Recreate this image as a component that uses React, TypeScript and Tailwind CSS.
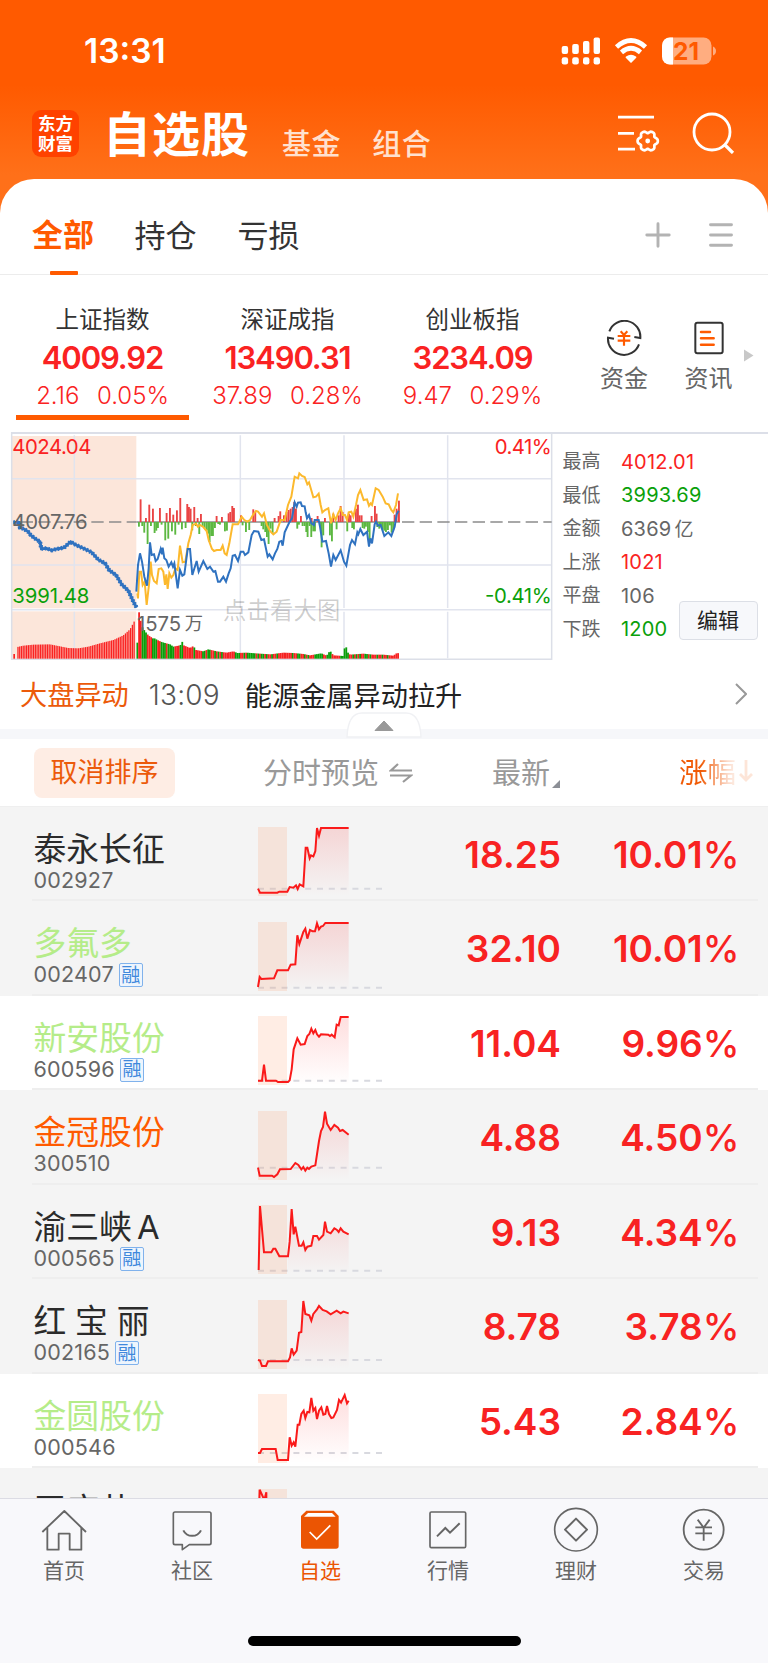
import React from "react";

type Pt = [number, number];

const toPoints = (pts: Pt[]) => pts.map((p) => p.join(",")).join(" ");

/* ---------- Intraday chart data (chart units, three per pixel) ---------- */

const preLine: Pt[] = [
  [40, 292], [58, 292], [60, 308], [72, 312], [84, 320], [92, 330], [104, 340], [120, 350], [124, 371], [140, 370], [155, 376],
  [170, 372], [192, 368], [212, 350], [228, 360], [250, 370], [275, 382], [295, 404], [315, 415], [328, 436],
  [348, 450], [365, 478], [385, 497], [400, 530], [410, 548],
];

const indexLine: Pt[] = [
  [409, 500], [414, 420], [420, 385], [426, 410], [433, 455], [441, 482], [446, 430], [450, 352], [455, 390], [462, 388],
  [467, 408], [473, 402], [482, 372], [486, 388], [488, 368], [493, 400], [499, 405], [506, 425], [514, 412], [519, 425],
  [523, 415], [533, 490], [540, 435], [547, 452], [553, 448], [563, 372], [570, 372], [577, 450], [590, 408], [596, 440],
  [610, 408], [622, 432], [630, 425], [640, 440], [646, 438], [654, 470], [660, 470], [670, 455], [678, 470], [686, 445],
  [692, 430], [698, 392], [705, 390], [714, 408], [722, 380], [730, 380], [735, 390], [745, 382], [755, 330], [762, 318],
  [775, 320], [784, 345], [792, 343], [803, 395], [808, 388], [818, 403], [825, 385], [832, 372], [838, 350], [844, 348],
  [848, 362], [854, 322], [868, 292], [876, 280], [884, 232], [890, 245], [894, 233], [902, 232], [906, 243], [914, 244],
  [917, 262], [921, 280], [927, 270], [934, 295], [942, 300], [944, 285], [956, 285], [960, 305], [967, 350], [978, 348],
  [986, 385], [993, 425], [1000, 390], [1007, 405], [1022, 376], [1032, 410], [1039, 422], [1050, 360], [1056, 345],
  [1065, 358], [1072, 322], [1075, 328], [1081, 312], [1090, 330], [1101, 320], [1107, 365], [1111, 340], [1116, 355],
  [1124, 298], [1128, 290], [1134, 302], [1142, 300], [1153, 333], [1165, 322], [1174, 333], [1184, 305], [1190, 268], [1196, 257],
];

const leadLine: Pt[] = [
  [412, 505], [414, 520], [418, 440], [423, 440], [428, 480], [434, 470], [440, 540], [448, 470], [452, 410], [456, 450],
  [462, 468], [470, 475], [476, 432], [484, 430], [490, 440], [495, 480], [499, 448], [503, 492], [508, 445], [514, 458],
  [520, 450], [526, 430], [533, 435], [540, 362], [548, 412], [556, 410], [565, 355], [572, 330], [578, 300], [588, 296],
  [594, 305], [600, 300], [610, 306], [620, 318], [626, 345], [636, 372], [642, 378], [650, 375], [662, 375], [668, 362],
  [674, 385], [680, 390], [688, 355], [698, 298], [714, 298], [725, 275], [733, 285], [742, 290], [750, 285], [760, 268],
  [768, 258], [774, 260], [786, 275], [792, 265], [800, 298], [810, 318], [820, 328], [830, 320], [842, 285], [854, 285],
  [864, 240], [874, 215], [884, 155], [894, 160], [898, 145], [906, 153], [914, 156], [922, 178], [927, 172], [940, 217],
  [948, 215], [956, 206], [962, 240], [967, 262], [975, 255], [985, 250], [993, 295], [1000, 268], [1007, 285], [1014, 265],
  [1022, 250], [1028, 270], [1035, 270], [1041, 285], [1046, 262], [1054, 260], [1060, 275], [1068, 240], [1074, 210],
  [1081, 195], [1091, 225], [1101, 223], [1107, 242], [1112, 235], [1116, 240], [1127, 190], [1136, 195], [1148, 215],
  [1157, 235], [1166, 238], [1174, 255], [1180, 262], [1188, 240], [1194, 205],
];

const upBars: Pt[] = [
  [422, 68], [438, 12], [448, 52], [459, 40], [480, 42], [500, 27], [510, 42], [520, 22], [531, 35], [541, 72], [562, 54],
  [567, 45], [572, 40], [583, 45], [593, 12], [603, 24], [650, 18], [666, 15], [686, 26], [691, 30], [697, 48], [702, 42],
  [723, 20], [760, 38], [766, 30], [824, 12], [836, 18], [841, 32], [852, 20], [860, 30], [866, 36], [872, 40], [878, 45],
  [883, 60], [888, 40], [903, 18], [935, 12], [953, 18], [975, 12], [1000, 25], [1016, 20], [1022, 48], [1028, 30],
  [1047, 25], [1052, 20], [1068, 40], [1074, 52], [1079, 20], [1085, 20], [1115, 18], [1125, 48], [1130, 25], [1184, 22],
  [1190, 40], [1197, 64],
];

const downBars: Pt[] = [
  [417, 14], [427, 12], [433, 32], [443, 66], [453, 12], [464, 33], [469, 26], [474, 18], [485, 8], [496, 55], [505, 50],
  [516, 28], [526, 38], [536, 8], [546, 22], [557, 18], [577, 25], [588, 12], [598, 36], [608, 14], [614, 18], [620, 24],
  [625, 35], [629, 60], [634, 42], [639, 42], [645, 18], [655, 6], [660, 8], [675, 28], [681, 26], [728, 10], [738, 30],
  [748, 24], [785, 12], [790, 22], [796, 30], [801, 45], [806, 66], [812, 20], [818, 35], [892, 20], [897, 8], [908, 12],
  [914, 12], [919, 30], [923, 45], [929, 12], [934, 45], [940, 28], [945, 28], [960, 12], [965, 76], [970, 40], [990, 40],
  [996, 58], [1010, 22], [1042, 28], [1057, 18], [1062, 22], [1088, 18], [1093, 20], [1098, 14], [1109, 55], [1104, 30],
  [1132, 15], [1138, 20], [1143, 16], [1148, 22], [1153, 26], [1158, 30], [1164, 24], [1170, 10], [1175, 32], [1180, 25],
];

const preVolume: Pt[] = [
  [52, 35], [70, 39], [100, 42], [150, 43], [175, 38], [205, 32], [235, 31], [265, 36], [300, 46], [340, 56], [370, 70], [390, 88], [406, 118],
];

const volume: Pt[] = [
  [412, 48], [417, 140], [422, 115], [427, 95], [435, 82], [445, 70], [460, 60], [465, 61], [470, 57], [485, 50], [495, 47],
  [510, 43], [520, 36], [530, 38], [541, 40], [546, 52], [551, 40], [570, 32], [580, 38], [588, 26], [610, 22], [625, 28],
  [650, 22], [680, 18], [700, 22], [712, 17], [740, 18], [780, 15], [812, 13], [850, 18], [880, 17], [910, 14], [930, 10],
  [964, 16], [980, 9], [990, 24], [1000, 10], [1030, 8], [1036, 46], [1042, 20], [1050, 12], [1090, 15], [1120, 12],
  [1150, 12], [1180, 9], [1192, 18], [1198, 14],
];

const volumeColors =
  "grrgggrrrgggrrgggrggggrrrggrrrrrrgrrrrggrggrrgrgrgrrrrrrrgggrrgrgggggrgrggrgrrgrrgrrrrrrrrgrrggrrgrgrrrgggggrrgggrrrrrgggrrrrgrgrgrrggrgrrrgrrgrrgrrrrr";

function heightAt(series: Pt[], x: number) {
  for (let i = 1; i < series.length; i++) {
    const [x0, h0] = series[i - 1];
    const [x1, h1] = series[i];
    if (x <= x1) return h0 + ((h1 - h0) * (x - x0)) / (x1 - x0);
  }
  return series[series.length - 1][1];
}

function IndexChart() {
  const pre = Array.from({ length: 68 }, (_, i) => 54 + i * 5.2);
  const vol = Array.from({ length: 152 }, (_, i) => 412 + i * 5.18);
  return (
    <svg width="553" height="229" viewBox="0 21 1659 687" className="shrink-0">
      <rect x="36" y="33" width="373" height="517" fill="#fce6da" />
      <rect x="36" y="559" width="373" height="143" fill="#fce6da" />
      <g stroke="#e1e4ee" strokeWidth="4.5">
        <path d="M223 31V549M223 560V700M721 31V549M721 560V700M1032 31V549M1032 560V700M1343 31V549M1343 560V700" />
        <path d="M35 161H1655M35 420H1655M35 554H1655" />
        <path d="M1655 22V704M35 22V704M33 702.5H1657" stroke="#dcdfe8" />
      </g>
      <path d="M62 291H409M1206 291H1655" stroke="#8c8c8c" strokeWidth="5" strokeDasharray="37 16" />
      <path d="M409 291H1200" stroke="#8c8c8c" strokeWidth="4" />
      {upBars.map(([x, h]) => (
        <rect key={x} x={x - 3} y={291 - h} width="5.6" height={h} fill="#ea4444" />
      ))}
      {downBars.map(([x, h]) => (
        <rect key={x} x={x - 3} y={291} width="5.6" height={h} fill="#5cb841" />
      ))}
      <rect x="40" y="687" width="5" height="14" fill="#fa2222" />
      {pre.map((x) => {
        const h = heightAt(preVolume, x);
        return <rect key={x} x={x - 2} y={701 - h} width="3.9" height={h} fill="#fa2222" />;
      })}
      {vol.map((x, i) => {
        const h = heightAt(volume, x);
        const green = volumeColors[i] === "g" || (x > 1032 && x < 1044);
        return <rect key={x} x={x - 2.6} y={701 - h} width="5.4" height={h} fill={green ? "#0a9e0a" : "#f52222"} />;
      })}
      <polyline points={toPoints(leadLine)} fill="none" stroke="#fcb92d" strokeWidth="6" />
      <polyline points={toPoints(indexLine)} fill="none" stroke="#2f72c0" strokeWidth="6" />
      <polyline points={toPoints(preLine)} fill="none" stroke="#2f72c0" strokeWidth="8.5" />
      <polyline points={toPoints(preLine)} fill="none" stroke="#2f72c0" strokeWidth="13" strokeDasharray="5 5" />
      <g fontSize="61" dominantBaseline="alphabetic">
        <text x="37" y="85.5" fill="#fa2222" textLength="237">4024.04</text>
        <text x="37" y="310.5" fill="#666" textLength="226">4007.76</text>
        <text x="37" y="533" fill="#0aa00a" textLength="231">3991.48</text>
        <text x="1655" y="85.5" fill="#fa2222" textAnchor="end" textLength="171">0.41%</text>
        <text x="1655" y="533" fill="#0aa00a" textAnchor="end" textLength="200">-0.41%</text>
        <text x="411" y="618.5" fill="#666" textLength="132">1575</text>
        <text x="554" y="615" fill="#666" fontSize="55">万</text>
        <text x="669" y="581" fill="#000" fillOpacity="0.2" fontSize="70" textLength="352">点击看大图</text>
      </g>
    </svg>
  );
}

/* ---------- Watch list ---------- */

type Stock = {
  name: string;
  code: string;
  tone: string;
  spacing?: string;
  suffix?: string;
  margin?: boolean;
  shaded?: boolean;
  price: string;
  change: string;
  base: number;
  line: Pt[];
};

const dark = "text-[#2b2b2b]";
const lime = "text-[#b5ec89]";
const orange = "text-[#ff5a00]";

const stocks: Stock[] = [
  {
    name: "泰永长征", code: "002927", tone: dark, shaded: true, price: "18.25", change: "10.01", base: 185,
    line: [[774, 185], [780, 197], [832, 197], [838, 194], [862, 194], [869, 180], [880, 182], [888, 175], [893, 186], [899, 172], [910, 178], [917, 62], [922, 62], [929, 94], [933, 85], [940, 88], [946, 72], [951, 3], [957, 26], [963, 3], [1046, 3]],
  },
  {
    name: "多氟多", code: "002407", tone: lime, margin: true, shaded: true, price: "32.10", change: "10.01", base: 197,
    line: [[774, 195], [779, 165], [784, 171], [822, 169], [832, 145], [864, 145], [872, 128], [886, 127], [892, 40], [898, 66], [910, 30], [916, 20], [922, 50], [930, 24], [938, 28], [945, 28], [951, 4], [957, 22], [963, 14], [969, 12], [976, 3], [1046, 3]],
  },
  {
    name: "新安股份", code: "600596", tone: lime, margin: true, price: "11.04", change: "9.96", base: 194,
    line: [[774, 194], [786, 194], [792, 146], [798, 194], [828, 194], [834, 198], [864, 198], [869, 193], [875, 160], [881, 100], [892, 67], [902, 86], [914, 84], [922, 60], [928, 54], [934, 38], [940, 52], [946, 42], [951, 55], [957, 62], [963, 55], [985, 56], [990, 60], [995, 56], [1004, 64], [1010, 26], [1016, 28], [1022, 3], [1046, 3]],
  },
  {
    name: "金冠股份", code: "300510", tone: orange, shaded: true, price: "4.88", change: "4.50", base: 170,
    line: [[774, 170], [779, 194], [816, 194], [822, 198], [832, 190], [840, 175], [872, 174], [886, 156], [895, 162], [904, 175], [910, 168], [916, 179], [922, 170], [927, 174], [934, 167], [946, 163], [957, 90], [963, 60], [969, 48], [975, 2], [981, 38], [992, 57], [1003, 42], [1014, 50], [1020, 60], [1028, 57], [1046, 71]],
  },
  {
    name: "渝三峡", suffix: "A", code: "000565", tone: dark, margin: true, shaded: true, price: "9.13", change: "4.34", base: 197,
    line: [[776, 195], [780, 3], [792, 142], [814, 142], [820, 131], [826, 131], [838, 154], [864, 154], [869, 110], [875, 12], [881, 88], [886, 65], [897, 122], [905, 122], [910, 112], [916, 135], [922, 125], [934, 122], [940, 93], [951, 93], [957, 104], [970, 90], [975, 50], [981, 80], [992, 85], [1003, 70], [1010, 74], [1016, 81], [1022, 70], [1030, 80], [1046, 88]],
  },
  {
    name: "红宝丽", code: "002165", tone: dark, spacing: "tracking-[8.800px]", margin: true, shaded: true, price: "8.78", change: "3.78", base: 180,
    line: [[774, 180], [780, 182], [786, 198], [798, 198], [804, 184], [864, 184], [870, 172], [875, 145], [881, 164], [890, 152], [897, 98], [904, 96], [910, 3], [916, 42], [928, 46], [934, 62], [940, 42], [951, 28], [957, 18], [968, 30], [980, 34], [992, 43], [1010, 32], [1022, 40], [1030, 35], [1046, 40]],
  },
  {
    name: "金圆股份", code: "000546", tone: lime, price: "5.43", change: "2.84", base: 177,
    line: [[774, 177], [780, 177], [786, 165], [827, 165], [833, 198], [864, 198], [869, 130], [875, 155], [881, 145], [886, 158], [893, 92], [898, 92], [904, 60], [911, 50], [916, 72], [922, 54], [928, 55], [934, 12], [940, 50], [946, 42], [951, 75], [957, 50], [964, 40], [970, 62], [976, 60], [981, 36], [987, 60], [994, 72], [1000, 70], [1011, 48], [1017, 18], [1023, 26], [1034, 3], [1041, 28], [1046, 20]],
  },
  {
    name: "王府井", code: "", tone: dark, shaded: true, price: "", change: "", base: 180,
    line: [[778, 35], [779, 2], [793, 33], [799, 10], [799, 60]],
  },
];

function Sparkline({ line, base }: { line: Pt[]; base: number }) {
  const body = line.filter(([x]) => x >= 862);
  const area = body.length ? toPoints([[862, 207], ...body, [body[body.length - 1][0], 207]]) : "";
  return (
    <svg width="124" height="69" viewBox="774 0 372 207" className="mt-[20.5px] shrink-0 overflow-visible">
      <defs>
        <linearGradient id="area" gradientUnits="userSpaceOnUse" x1="0" y1="0" x2="0" y2="207">
          <stop offset="0" stopColor="#fa2222" stopOpacity="0.15" />
          <stop offset="1" stopColor="#fa2222" stopOpacity="0" />
        </linearGradient>
      </defs>
      <path d={`M774 ${base}H1146`} stroke="#d8d9df" strokeWidth="6" strokeDasharray="18 17.4" />
      <rect x="774" y="0" width="87" height="207" fill="#ff6a1e" fillOpacity="0.12" />
      <polygon points={area} fill="url(#area)" />
      <polyline points={toPoints(line)} fill="none" stroke="#fa1a1a" strokeWidth="6" />
    </svg>
  );
}

function StockRow({ s }: { s: Stock }) {
  return (
    <div className={`flex h-[94.5px] shrink-0 ${s.shaded ? "bg-[#f4f4f4]" : "bg-white"}`}>
      <div className="ml-8 flex w-[726px] border-b-2 border-[#eeeeee]">
        <div className="flex w-[226px] flex-col pt-[23.500px] pl-[1.5px]">
          <div className={`flex h-[38px] items-center text-[32.8px] leading-none whitespace-nowrap ${s.tone} ${s.spacing ?? ""}`}>
            {s.name}
            {s.suffix && <span className="ml-[5px]">{s.suffix}</span>}
          </div>
          {s.code && (
            <div className="flex h-[25px] items-center gap-[5px] text-[21.5px] leading-none text-[#666]">
              <span className="tracking-[0.2px]">{s.code}</span>
              {s.margin && (
                <span className="flex h-[24px] w-[24px] items-center justify-center rounded-[2px] border-[1.5px] border-[#80b2ec] bg-[#eef5fd] text-[19px] text-[#3f88dc]">
                  融
                </span>
              )}
            </div>
          )}
        </div>
        <Sparkline line={s.line} base={s.base} />
        <div className="flex h-[95px] w-[179px] items-center justify-end text-[37px] leading-none font-semibold text-[#f82222]">{s.price}</div>
        <div className="flex h-[95px] w-[178.500px] shrink-0 items-center justify-end text-[37px] leading-none font-semibold text-[#f82222]">
          {s.change}
          {s.change && <span className="font-medium">%</span>}
        </div>
      </div>
    </div>
  );
}

/* ---------- Index summary ---------- */

const indices = [
  { name: "上证指数", value: "4009.92", diff: "2.16", pct: "0.05%", active: true },
  { name: "深证成指", value: "13490.31", diff: "37.89", pct: "0.28%", active: false },
  { name: "创业板指", value: "3234.09", diff: "9.47", pct: "0.29%", active: false },
];

const stats = [
  { label: "最高", value: "4012.01", tone: "text-[#fa2222]" },
  { label: "最低", value: "3993.69", tone: "text-[#0aa00a]" },
  { label: "金额", value: "6369亿", tone: "text-[#666]" },
  { label: "上涨", value: "1021", tone: "text-[#fa2222]" },
  { label: "平盘", value: "106", tone: "text-[#666]" },
  { label: "下跌", value: "1200", tone: "text-[#0aa00a]" },
];

function FundsIcon() {
  return (
    <svg width="36" height="36" viewBox="669 90 108 108" fill="none">
      <g stroke="#333" strokeWidth="6">
        <path d="M679 124A48 48 0 0 1 772 144L754 141" />
        <path d="M768 163A48 48 0 0 1 675 143L693 146" />
      </g>
      <path d="M713 124L723 135L733 124M704 138H742M704 152H742M723 135V167" stroke="#ff5a00" strokeWidth="6.5" />
    </svg>
  );
}

function NewsIcon() {
  return (
    <svg width="36" height="36" viewBox="923 90 108 108" fill="none">
      <rect x="936" y="98" width="82" height="92" rx="6" stroke="#333" strokeWidth="6" />
      <path d="M953 126H980M953 145H991M953 164H991" stroke="#ff5a00" strokeWidth="7.5" strokeLinecap="round" />
    </svg>
  );
}

/* ---------- Bottom navigation ---------- */

const navItems = [
  {
    label: "首页",
    icon: (
      <svg width="48" height="48" viewBox="120 528 144 144" fill="none" stroke="#666" strokeWidth="5.500" strokeLinejoin="round">
        <path d="M127 606L193 543L258 606M142 594V659H176V611H209V659H244V594" />
      </svg>
    ),
  },
  {
    label: "社区",
    icon: (
      <svg width="48" height="48" viewBox="504 528 144 144" fill="none" stroke="#666" strokeWidth="5" strokeLinejoin="round">
        <path d="M525 546H628Q633 546 633 551V639Q633 644 628 644H568L547 659V644H525Q520 644 520 639V551Q520 546 525 546Z" />
        <path d="M550 601C561 623 592 623 603 601" strokeWidth="6" />
      </svg>
    ),
  },
  {
    label: "自选",
    active: true,
    icon: (
      <svg width="48" height="48" viewBox="888 528 144 144" fill="none">
        <path d="M919 542H1001L1016 558V648Q1016 656 1008 656H911Q903 656 903 648V558Z" fill="#eb5503" />
        <path d="M912 560L924 549H996L1007 560Z" fill="#fff" />
        <path d="M929 606L950 627L991 586" stroke="#fff" strokeWidth="5" />
      </svg>
    ),
  },
  {
    label: "行情",
    icon: (
      <svg width="48" height="48" viewBox="72 528 144 144" fill="none" stroke="#666" strokeWidth="5">
        <rect x="90" y="546" width="107" height="107" rx="4" />
        <path d="M111 619L136 594L150 608L179 580" strokeWidth="6" />
      </svg>
    ),
  },
  {
    label: "理财",
    icon: (
      <svg width="48" height="48" viewBox="456 528 144 144" fill="none" stroke="#666" strokeWidth="5">
        <circle cx="528" cy="599" r="64" />
        <path d="M528 566L561 599L528 632L495 599Z" strokeWidth="6" strokeLinejoin="round" />
      </svg>
    ),
  },
  {
    label: "交易",
    icon: (
      <svg width="48" height="48" viewBox="840 528 144 144" fill="none" stroke="#666" strokeWidth="5.500">
        <circle cx="911" cy="599" r="60" />
        <path d="M893 569L911 593L929 569M911 593V632M886 592H936M886 610H936" />
      </svg>
    ),
  },
];

/* ---------- Header pieces ---------- */

function StatusIcons() {
  return (
    <svg width="160" height="34" viewBox="558 34 160 34" fill="#fff">
      <rect x="561.7" y="46" width="6.4" height="8" rx="2" />
      <rect x="572.2" y="44" width="6.6" height="10" rx="2" />
      <rect x="583" y="41" width="6.4" height="13" rx="2" />
      <rect x="593.6" y="37.5" width="6.4" height="16.5" rx="2" />
      <rect x="561.7" y="57.2" width="6.4" height="7.2" rx="2.2" />
      <rect x="572.2" y="57.2" width="6.6" height="7.2" rx="2.2" />
      <rect x="583" y="57.2" width="6.4" height="7.2" rx="2.2" />
      <rect x="593.6" y="57.2" width="6.4" height="7.2" rx="2.2" />
      <path d="M631 63L636 58Q637 57 636 56.4Q631 53 626 56.4Q625 57 626 58Z" />
      <path d="M621.5 52.3Q631 44.3 640.5 52.3" fill="none" stroke="#fff" strokeWidth="4.8" />
      <path d="M616.5 47Q631 34.2 645.5 47" fill="none" stroke="#fff" strokeWidth="4.8" />
      <rect x="662" y="37.5" width="49.5" height="27" rx="8" fillOpacity="0.5" />
      <path d="M673 37.5V64.5H670A8 8 0 0 1 662 56.500V45.500A8 8 0 0 1 670 37.5Z" />
      <path d="M713 46.500Q716 48 716 51T713 55.500Z" fillOpacity="0.5" />
      <text x="686" y="60" fontSize="24.500" fontWeight="700" textAnchor="middle" fill="#ff5a00">21</text>
    </svg>
  );
}

function FilterSettingsIcon() {
  const gear = Array.from({ length: 72 }, (_, i) => {
    const a = (i / 72) * Math.PI * 2;
    const r = 9.2 + 1.15 * Math.cos(6 * a) - 0.25 * Math.cos(12 * a);
    return [647.7 + r * Math.cos(a), 142 + r * Math.sin(a)].map((v) => v.toFixed(2)).join(",");
  }).join(" ");
  return (
    <svg width="44" height="44" viewBox="616 111 44 44" fill="none" stroke="#fff" strokeWidth="2.7">
      <path d="M618 118.200H654M618 134.300H634M618 150.200H635" />
      <polygon points={gear} strokeLinejoin="round" />
      <circle cx="647.7" cy="142" r="2.4" fill="#fff" stroke="none" />
    </svg>
  );
}

export default function App() {
  return (
    <div className="flex h-[1663px] w-[768px] flex-col overflow-hidden bg-white font-['Inter','Noto_Sans_CJK_SC',sans-serif]">
      <div className="bg-[linear-gradient(180deg,#ff5a00_0px,#ff5a00_85px,#ff7019_175px,#ff701a_220px)]">
        <div className="flex h-[85px] items-center justify-between pt-[17px] pr-[50px] pl-[84px]">
          <div className="mt-[2px] text-[33.500px] leading-none font-semibold text-white">13:31</div>
          <StatusIcons />
        </div>
        <div className="flex h-[94px] items-center pr-[33px] pl-8">
          <div className="mt-[3px] flex h-[47px] w-[47px] flex-col items-center justify-center rounded-[9px] bg-[#ff4200] text-[17.500px] leading-[20px] font-bold text-white">
            <span>东方</span>
            <span>财富</span>
          </div>
          <h1 className="ml-[24px] flex h-[94px] items-center pt-[6px] text-[48px] leading-none font-bold tracking-[1px] text-white">自选股</h1>
          <div className="ml-[32px] flex h-[94px] items-center gap-[31.500px] pt-[24px] text-[29px] leading-none font-medium tracking-[0.4px] text-[#ffe1cf]">
            <span>基金</span>
            <span>组合</span>
          </div>
          <div className="ml-auto flex items-center gap-[31px]">
            <FilterSettingsIcon />
            <svg width="44" height="44" viewBox="691 110 44 44" fill="none" stroke="#fff" strokeWidth="2.8">
              <circle cx="712" cy="132" r="18" />
              <path d="M724.500 144.500L733 153" strokeWidth="3.2" />
            </svg>
          </div>
        </div>

        <div className="flex h-[96px] items-center rounded-t-[34px] border-b-[1.500px] border-[#ececec] bg-white pr-[33.500px] pl-[32px] text-[31px] leading-none text-[#333]">
          <div className="relative flex h-full w-[62px] items-center justify-center pt-[16px] font-bold text-[#ff5a00]">
            全部
            <span className="absolute bottom-[-1px] ml-[1px] h-[4px] w-[28px] rounded-[1px] bg-[#ff5a00]" />
          </div>
          <div className="ml-[40.500px] flex h-full items-center pt-[17px]">持仓</div>
          <div className="ml-[41px] flex h-full items-center pt-[17px]">亏损</div>
          <svg width="28" height="28" viewBox="0 0 28 28" className="mt-[16px] ml-auto" stroke="#b3b3b3" strokeWidth="2.9" strokeLinecap="round">
            <path d="M14 2.800V25.200M2.800 14H25.200" />
          </svg>
          <svg width="28" height="28" viewBox="0 0 28 28" className="mt-[16px] ml-[35px]" stroke="#b3b3b3" strokeWidth="2.9" strokeLinecap="round">
            <path d="M3.500 3.700H24.500M3.500 14H24.500M3.500 24.200H24.500" />
          </svg>
        </div>
      </div>

      <div className="flex h-[157px] shrink-0 pl-[10px]">
        {indices.map((it) => (
          <div key={it.name} className="flex w-[185px] flex-col items-center pt-[30px]">
            <div className="flex h-[30px] items-center text-[23.500px] leading-none text-[#333]">{it.name}</div>
            <div className="mt-[4px] flex h-[37px] items-center text-[31px] leading-none font-semibold tracking-[-1.100px] text-[#fa2222]">{it.value}</div>
            <div className="mt-[6px] flex h-[28px] items-center gap-[17.500px] text-[24px] leading-none font-[350] tracking-[0px] text-[#fa2222]">
              <span>{it.diff}</span>
              <span>{it.pct}</span>
            </div>
            {it.active && <div className="mt-[5px] h-[4.500px] w-[173px] bg-[#ff5a00]" />}
          </div>
        ))}
        <div className="ml-[27px] flex w-[64px] flex-col items-center pt-[44.500px]">
          <FundsIcon />
          <div className="mt-[9px] flex h-[28px] items-center text-[24px] leading-none text-[#666]">资金</div>
        </div>
        <div className="ml-[20.500px] flex w-[64px] flex-col items-center pt-[44.500px]">
          <NewsIcon />
          <div className="mt-[9px] flex h-[28px] items-center text-[24px] leading-none text-[#666]">资讯</div>
        </div>
        <svg width="10" height="13" viewBox="0 0 10 13" className="mt-[74px] ml-[3.500px]" fill="#c8c8c8">
          <path d="M0 0.500L9.500 6.500L0 12.500Z" />
        </svg>
      </div>

      <div className="ml-[11px] h-[1.500px] shrink-0 bg-[#dcdfe8]" />
      <div className="mt-[-1.500px] flex h-[229px] shrink-0">
        <IndexChart />
        <div className="flex flex-1 items-start pt-[13px] pl-[9.500px]">
          <div className="w-[110px] shrink-0 whitespace-nowrap">
            {stats.map((s) => (
              <div key={s.label} className="flex h-[33.500px] items-center text-[19px] leading-none text-[#666]">
                <span className="w-[58.500px] shrink-0">{s.label}</span>
                <span className={`text-[20px] tracking-[0.200px] ${s.tone}`}>
                  {s.value.replace("亿", "")}
                  {s.value.endsWith("亿") && <span className="ml-[3px] text-[19px]">亿</span>}
                </span>
              </div>
            ))}
          </div>
          <button className="mt-[155.500px] mr-[10.500px] ml-auto flex h-[39.500px] w-[79px] shrink-0 items-center justify-center rounded-[4px] border-[1.500px] border-[#dcdfe6] bg-[#f7f8fb] text-[21px] leading-none text-[#222]">
            编辑
          </button>
        </div>
      </div>

      <div className="flex h-[68px] shrink-0 items-center pr-[21px] pl-[20px] text-[27.200px] leading-none">
        <span className="mt-[1px] text-[#ec5a0a]">大盘异动</span>
        <span className="ml-[20px] w-[72px] text-[28px] font-[350] tracking-[0.200px] text-[#555]">13:09</span>
        <span className="mt-[3px] ml-[24px] text-[#222]">能源金属异动拉升</span>
        <svg width="12" height="22" viewBox="0 0 12 22" className="mt-[-2px] ml-auto" fill="none" stroke="#999" strokeWidth="2">
          <path d="M1 1L11 11L1 21" />
        </svg>
      </div>

      <div className="flex h-[9.500px] shrink-0 items-end justify-center bg-[#f6f7fa]">
        <svg width="76" height="26" viewBox="0 0 76 26" className="mb-[1px] shrink-0">
          <path d="M1 25Q2 1 16 1H60Q74 1 75 25Z" fill="#fff" stroke="#f0f1f4" strokeWidth="1.400" />
          <path d="M38 9L47 18.500H29Z" fill="#999" stroke="#999" strokeWidth="1" strokeLinejoin="round" />
        </svg>
      </div>

      <div className="flex h-[68px] shrink-0 items-center border-b border-[#efefef] pt-[1px] pl-[34px] text-[29px] leading-none text-[#999]">
        <div className="flex h-[50px] w-[141px] items-center justify-center rounded-[8px] bg-[#feede4] text-[27px] text-[#ec5a0a]">取消排序</div>
        <div className="mt-[2px] ml-[88px] w-[116px]">分时预览</div>
        <svg width="24" height="20" viewBox="0 0 24 20" className="ml-[10px]" fill="none" stroke="#999" strokeWidth="2.200">
          <path d="M9 1L2 7.500H23M1 12.500H22L14 19" />
        </svg>
        <div className="mt-[2px] ml-[79px] w-[58px]">最新</div>
        <svg width="8" height="8" viewBox="0 0 8 8" className="mt-[22px] ml-[2px]" fill="#8c8f96">
          <path d="M8 0V8H0Z" />
        </svg>
        <div className="mt-[2px] ml-[119px] bg-[linear-gradient(90deg,#f05a05_0%,#f05a05_38%,#fbd9c8_85%,#fdeee5_100%)] bg-clip-text text-[28.500px] whitespace-nowrap text-transparent">
          涨幅
        </div>
        <svg width="14" height="22" viewBox="0 0 14 22" className="mt-[-3px] ml-[3px]" fill="none" stroke="#fde5d8" strokeWidth="2.800">
          <path d="M7 0V20M1 14L7 20L13 14" />
        </svg>
      </div>

      <div className="flex min-h-0 flex-1 flex-col overflow-hidden">
        {stocks.map((s) => (
          <StockRow key={s.name} s={s} />
        ))}
      </div>

      <nav className="flex h-[165px] shrink-0 flex-col items-center border-t border-[#dcdce4] bg-[#f8f8fb]">
        <div className="flex w-full pt-[7px]">
          {navItems.map((n) => (
            <div key={n.label} className="flex w-[128px] flex-col items-center">
              {n.icon}
              <div className={`mt-[4px] flex h-[24px] items-center text-[21px] leading-none ${n.active ? "text-[#eb5503]" : "text-[#666]"}`}>{n.label}</div>
            </div>
          ))}
        </div>
        <div className="mt-[54px] h-[10px] w-[273px] rounded-full bg-black" />
      </nav>
    </div>
  );
}
